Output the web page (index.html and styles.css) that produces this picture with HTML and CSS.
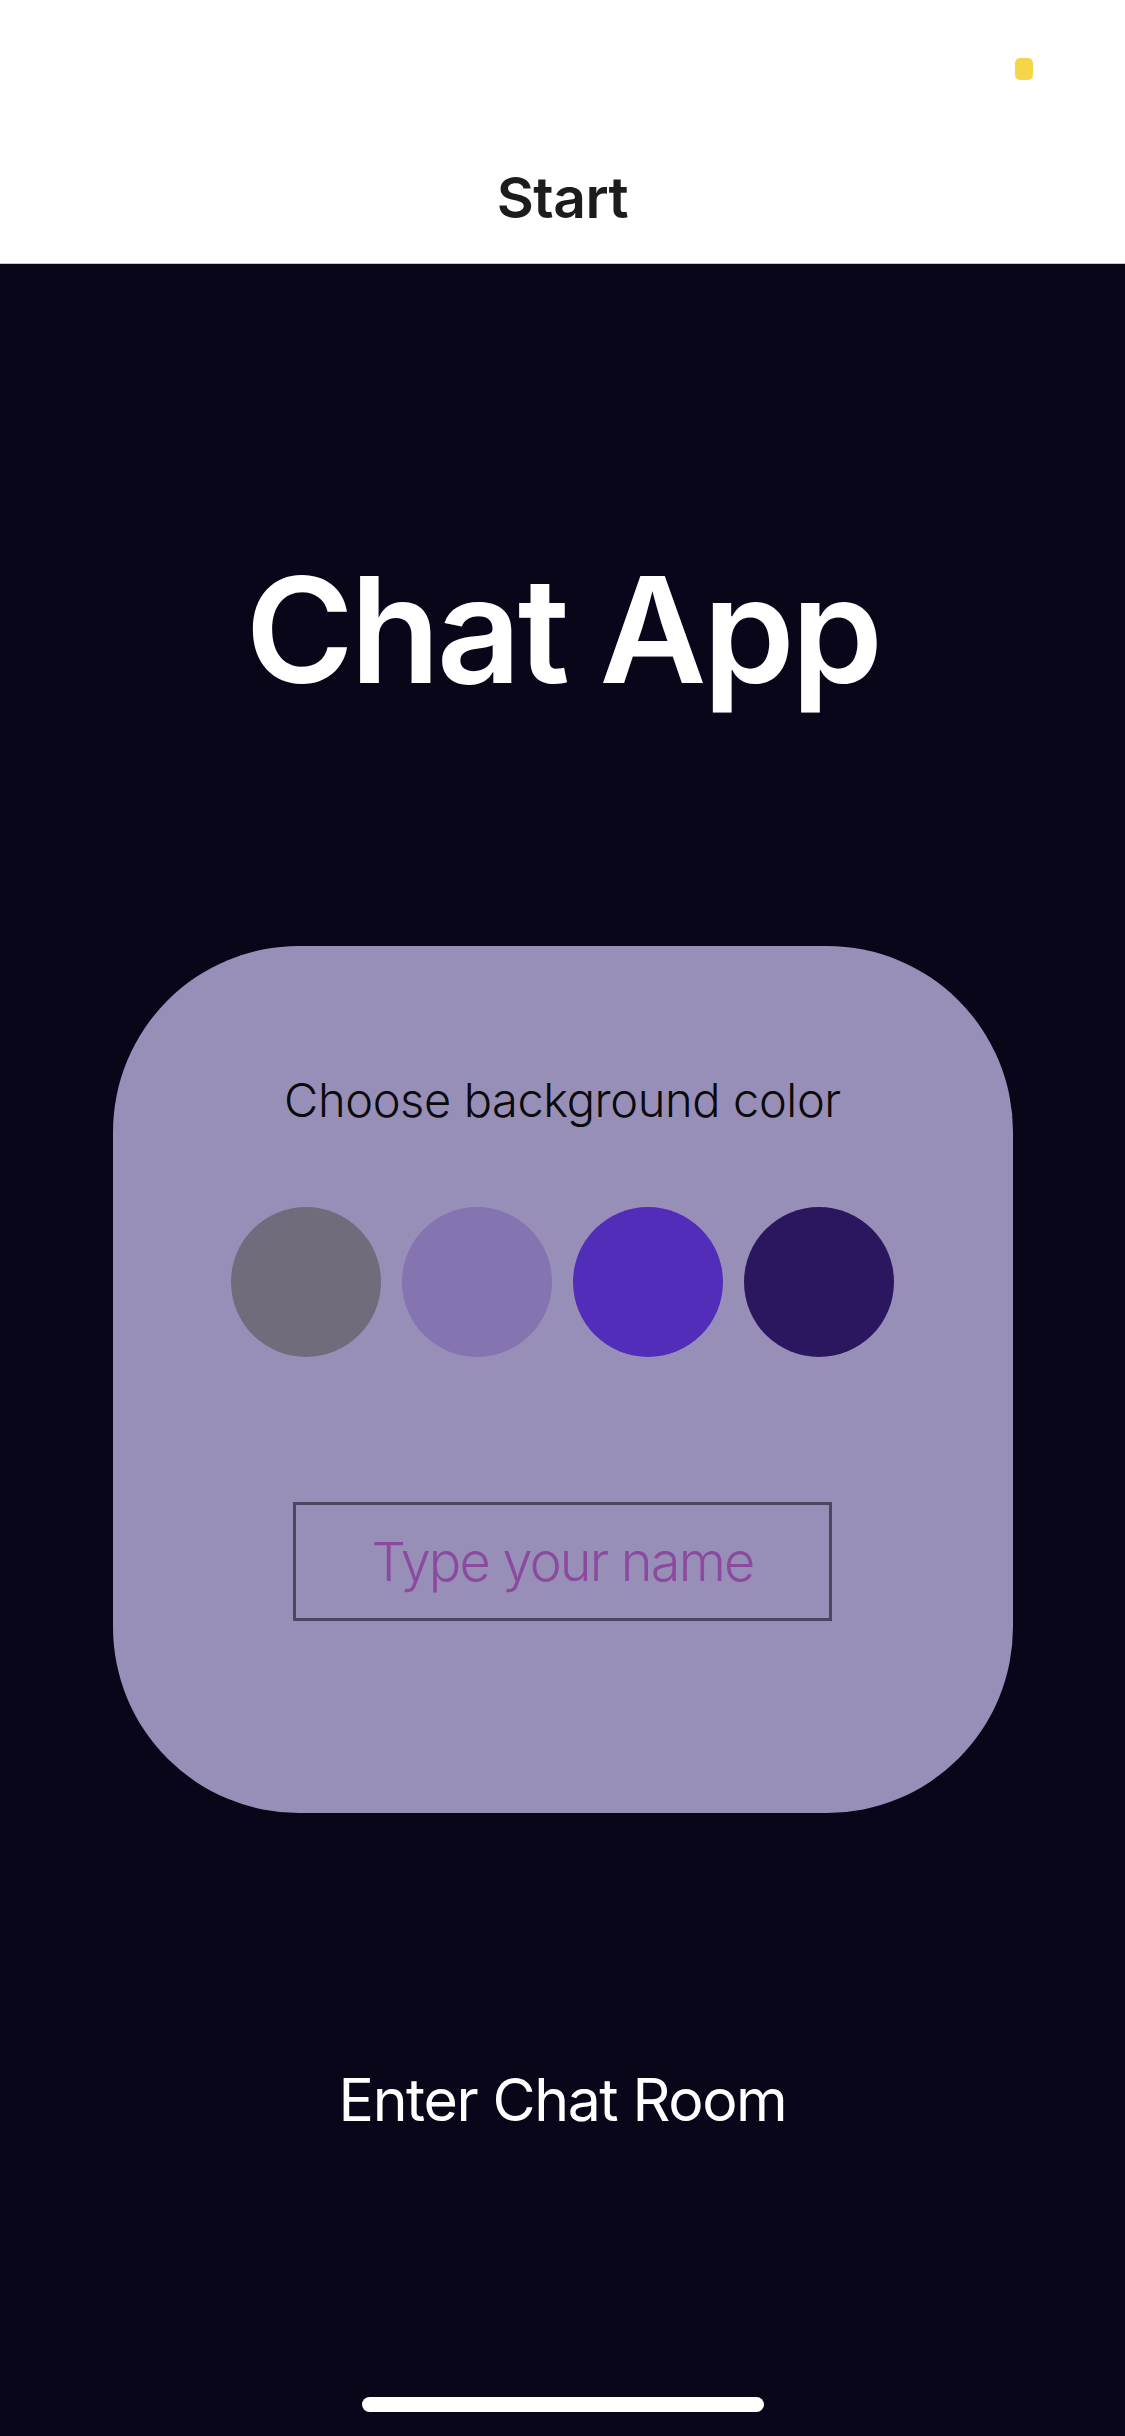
FILE: index.html
```html
<!DOCTYPE html>
<html lang="en">
<head>
<meta charset="utf-8">
<title>Start</title>
<link rel="stylesheet" href="styles.css">
</head>
<body>
<header class="nav">
  <div class="status-bar"><span class="status-dot"></span></div>
  <h1 class="nav-title">Start</h1>
</header>
<main class="screen">
  <h2 class="app-title">Chat App</h2>
  <section class="card">
    <p class="card-label">Choose background color</p>
    <div class="swatches">
      <button class="swatch swatch-gray" aria-label="Gray"></button>
      <button class="swatch swatch-lavender" aria-label="Lavender"></button>
      <button class="swatch swatch-violet" aria-label="Violet"></button>
      <button class="swatch swatch-indigo" aria-label="Indigo"></button>
    </div>
    <input class="name-input" type="text" placeholder="Type your name">
  </section>
  <button class="enter-btn">Enter Chat Room</button>
  <div class="home-indicator"></div>
</main>
</body>
</html>
```
FILE: styles.css
```css
* { box-sizing: border-box; }
html, body {
  margin: 0;
  padding: 0;
  background: #0a0619;
  font-family: Inter, "Noto Sans", "Liberation Sans", sans-serif;
}
body {
  width: 1125px;
  min-height: 2436px;
}
.nav {
  height: 264px;
  background: #ffffff;
  border-bottom: 1px solid #c6c6c8;
  display: flex;
  flex-direction: column;
}
.status-bar {
  height: 169px;
  display: flex;
  justify-content: flex-end;
  align-items: flex-start;
  padding: 58px 92px 0 0;
}
.status-dot {
  width: 18px;
  height: 22px;
  border-radius: 5px;
  background: #f7d549;
}
.nav-title {
  margin: 0;
  font-size: 57px;
  line-height: 57px;
  font-weight: 600;
  color: #1c1c1e;
  text-align: center;
  letter-spacing: -0.5px;
}
.screen {
  display: flex;
  flex-direction: column;
  align-items: center;
}
.app-title {
  margin: 292px 0 0;
  font-size: 147px;
  line-height: 147px;
  font-weight: 600;
  color: #ffffff;
  letter-spacing: -3.5px;
}
.card {
  margin-top: 243px;
  width: 900px;
  height: 867px;
  border-radius: 186px;
  background: #988fb9;
  display: flex;
  flex-direction: column;
  align-items: center;
  padding-top: 130px;
}
.card-label {
  margin: 0;
  font-size: 47px;
  line-height: 47px;
  font-weight: 300;
  color: #0a0a0a;
  letter-spacing: -0.4px;
}
.swatches {
  margin-top: 84px;
  display: flex;
  gap: 21px;
}
.swatch {
  width: 150px;
  height: 150px;
  border-radius: 50%;
  border: none;
  padding: 0;
}
.swatch-gray { background: #716c7b; }
.swatch-lavender { background: #8474b0; }
.swatch-violet { background: #522db9; }
.swatch-indigo { background: #2b175f; }
.name-input {
  margin-top: 145px;
  width: 539px;
  height: 119px;
  border: 3px solid #4d4561;
  background: transparent;
  font-family: inherit;
  font-size: 54px;
  font-weight: 300;
  letter-spacing: -1.8px;
  text-align: center;
  color: #8c4a9e;
  outline: none;
  padding: 0;
}
.name-input::placeholder {
  color: #8c4a9e;
  opacity: 1;
}
.enter-btn {
  margin-top: 257px;
  background: none;
  border: none;
  padding: 0;
  font-family: inherit;
  font-size: 59px;
  line-height: 59px;
  font-weight: 400;
  letter-spacing: -1.4px;
  color: #ffffff;
}
.home-indicator {
  margin-top: 268px;
  width: 402px;
  height: 15px;
  border-radius: 8px;
  background: #ffffff;
}
```
